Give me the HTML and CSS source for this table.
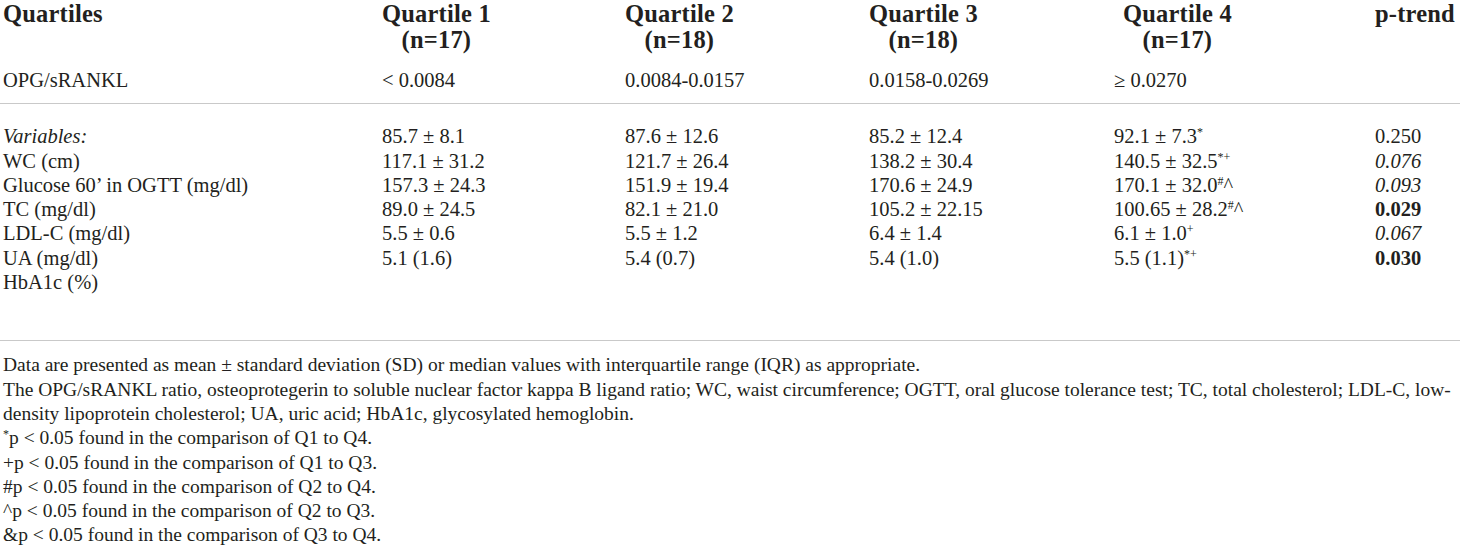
FILE: index.html
```html
<!DOCTYPE html>
<html lang="en">
<head>
    <meta charset="UTF-8">
    <meta name="viewport" content="width=device-width, initial-scale=1.0">
    <title>OPG/sRANKL quartiles</title>
    <link rel="stylesheet" href="styles.css">
</head>
<body>

    <div class="table">
        <!-- Column headings -->
        <div class="row head">
            <div class="cell"><span class="head-text">Quartiles</span></div>
            <div class="cell"><span class="head-text">Quartile 1<br>(n=17)</span></div>
            <div class="cell"><span class="head-text">Quartile 2<br>(n=18)</span></div>
            <div class="cell"><span class="head-text">Quartile 3<br>(n=18)</span></div>
            <div class="cell q4"><span class="head-text">Quartile 4<br>(n=17)</span></div>
            <div class="cell"><span class="head-text">p-trend</span></div>
        </div>

        <div class="row range">
            <div class="cell">OPG/sRANKL</div>
            <div class="cell">&lt; 0.0084</div>
            <div class="cell">0.0084-0.0157</div>
            <div class="cell">0.0158-0.0269</div>
            <div class="cell">&ge; 0.0270</div>
            <div class="cell"></div>
        </div>

        <div class="rule"></div>

        <div class="body">
            <div class="row">
                <div class="cell"><em>Variables:</em></div>
                <div class="cell">85.7 &plusmn; 8.1</div>
                <div class="cell">87.6 &plusmn; 12.6</div>
                <div class="cell">85.2 &plusmn; 12.4</div>
                <div class="cell">92.1 &plusmn; 7.3<sup>*</sup></div>
                <div class="cell">0.250</div>
            </div>
            <div class="row">
                <div class="cell">WC (cm)</div>
                <div class="cell">117.1 &plusmn; 31.2</div>
                <div class="cell">121.7 &plusmn; 26.4</div>
                <div class="cell">138.2 &plusmn; 30.4</div>
                <div class="cell">140.5 &plusmn; 32.5<sup>*+</sup></div>
                <div class="cell"><em>0.076</em></div>
            </div>
            <div class="row">
                <div class="cell">Glucose 60&rsquo; in OGTT (mg/dl)</div>
                <div class="cell">157.3 &plusmn; 24.3</div>
                <div class="cell">151.9 &plusmn; 19.4</div>
                <div class="cell">170.6 &plusmn; 24.9</div>
                <div class="cell">170.1 &plusmn; 32.0<sup>#</sup>^</div>
                <div class="cell"><em>0.093</em></div>
            </div>
            <div class="row">
                <div class="cell">TC (mg/dl)</div>
                <div class="cell">89.0 &plusmn; 24.5</div>
                <div class="cell">82.1 &plusmn; 21.0</div>
                <div class="cell">105.2 &plusmn; 22.15</div>
                <div class="cell">100.65 &plusmn; 28.2<sup>#</sup>^</div>
                <div class="cell"><strong>0.029</strong></div>
            </div>
            <div class="row">
                <div class="cell">LDL-C (mg/dl)</div>
                <div class="cell">5.5 &plusmn; 0.6</div>
                <div class="cell">5.5 &plusmn; 1.2</div>
                <div class="cell">6.4 &plusmn; 1.4</div>
                <div class="cell">6.1 &plusmn; 1.0<sup>+</sup></div>
                <div class="cell"><em>0.067</em></div>
            </div>
            <div class="row">
                <div class="cell">UA (mg/dl)</div>
                <div class="cell">5.1 (1.6)</div>
                <div class="cell">5.4 (0.7)</div>
                <div class="cell">5.4 (1.0)</div>
                <div class="cell">5.5 (1.1)<sup>*+</sup></div>
                <div class="cell"><strong>0.030</strong></div>
            </div>
            <div class="row">
                <div class="cell">HbA1c (%)</div>
                <div class="cell"></div>
                <div class="cell"></div>
                <div class="cell"></div>
                <div class="cell"></div>
                <div class="cell"></div>
            </div>
        </div>

        <div class="rule rule-bottom"></div>

        <!-- Footnotes -->
        <div class="notes">
            <p>Data are presented as mean &plusmn; standard deviation (SD) or median values with interquartile range (IQR) as appropriate.</p>
            <p>The OPG/sRANKL ratio, osteoprotegerin to soluble nuclear factor kappa B ligand ratio; WC, waist circumference; OGTT, oral glucose tolerance test; TC, total cholesterol; LDL-C, low-<br>density lipoprotein cholesterol; UA, uric acid; HbA1c, glycosylated hemoglobin.</p>
            <p><sup>*</sup>p &lt; 0.05 found in the comparison of Q1 to Q4.</p>
            <p>+p &lt; 0.05 found in the comparison of Q1 to Q3.</p>
            <p>#p &lt; 0.05 found in the comparison of Q2 to Q4.</p>
            <p>^p &lt; 0.05 found in the comparison of Q2 to Q3.</p>
            <p>&amp;p &lt; 0.05 found in the comparison of Q3 to Q4.</p>
        </div>
    </div>

</body>
</html>
```

FILE: styles.css
```css
body {
    margin: 0;
    background: #fff;
    color: #231f20;
    font-family: 'Liberation Serif', 'Times New Roman', serif;
    font-size: 20.5px;
}
.table {
    padding: 1px 0 0 3px;
}
.row {
    display: grid;
    grid-template-columns: 379px 243px 244px 245px 261px 1fr;
    line-height: 24.3px;
    white-space: nowrap;
}
.head {
    font-size: 24.5px;
    font-weight: bold;
    line-height: 25.5px;
    letter-spacing: 0.2px;
}
.head-text {
    display: inline-block;
    text-align: center;
}
.q4 {
    padding-left: 9px;
}
.range {
    margin-top: 16px;
}
.rule {
    height: 1px;
    background: #c9c9c9;
    margin: 11px 0 20px -3px;
}
.rule-bottom {
    margin: 46px 0 12px -3px;
}
sup {
    font-size: 12px;
    line-height: 0;
    vertical-align: 7px;
}
.notes {
    font-size: 19.5px;
}
.notes p {
    margin: 0;
    line-height: 24.3px;
}
.notes sup {
    vertical-align: 6px;
}
```
